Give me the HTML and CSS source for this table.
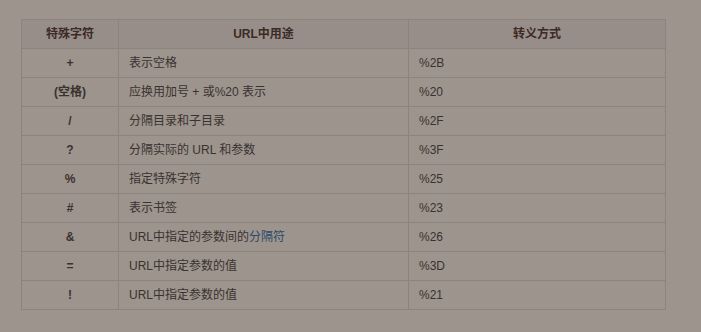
FILE: index.html
```html
<!DOCTYPE html>
<html lang="zh">
<head>
<meta charset="utf-8">
<link rel="stylesheet" href="styles.css">
</head>
<body>
<div class="page">
<table class="ref">
<colgroup><col class="c1"><col class="c2"><col class="c3"></colgroup>
<thead>
<tr><th>特殊字符</th><th>URL中用途</th><th>转义方式</th></tr>
</thead>
<tbody>
<tr><td class="sym">+</td><td>表示空格</td><td>%2B</td></tr>
<tr><td class="sym">(空格)</td><td>应换用加号 + 或%20 表示</td><td>%20</td></tr>
<tr><td class="sym">/</td><td>分隔目录和子目录</td><td>%2F</td></tr>
<tr><td class="sym">?</td><td>分隔实际的 URL 和参数</td><td>%3F</td></tr>
<tr><td class="sym">%</td><td>指定特殊字符</td><td>%25</td></tr>
<tr><td class="sym">#</td><td>表示书签</td><td>%23</td></tr>
<tr><td class="sym">&amp;</td><td>URL中指定的参数间的<a class="link" href="#">分隔符</a></td><td>%26</td></tr>
<tr><td class="sym">=</td><td>URL中指定参数的值</td><td>%3D</td></tr>
<tr><td class="sym">!</td><td>URL中指定参数的值</td><td>%21</td></tr>
</tbody>
</table>
</div>
</body>
</html>
```
FILE: styles.css
```css
html, body {
  margin: 0;
  background: #9d948e;
}
.page {
  padding: 19px 21px;
  font-family: "Liberation Sans", "Noto Sans CJK SC", sans-serif;
  font-size: 12px;
  color: #3a322e;
}
.ref {
  border-collapse: collapse;
  width: 644px;
  table-layout: fixed;
}
.c1 { width: 97px; }
.c2 { width: 290px; }
.c3 { width: 257px; }
.ref th, .ref td {
  border: 1px solid #8b837e;
  height: 28px;
  padding: 0 10px;
  line-height: 16px;
}
.ref th {
  background: #978e89;
  font-weight: bold;
  color: #3c2a25;
  text-align: center;
}
.ref td {
  text-align: left;
}
.ref td.sym {
  text-align: center;
  font-weight: bold;
}
.link {
  color: #2c4a68;
  text-decoration: none;
}
```
